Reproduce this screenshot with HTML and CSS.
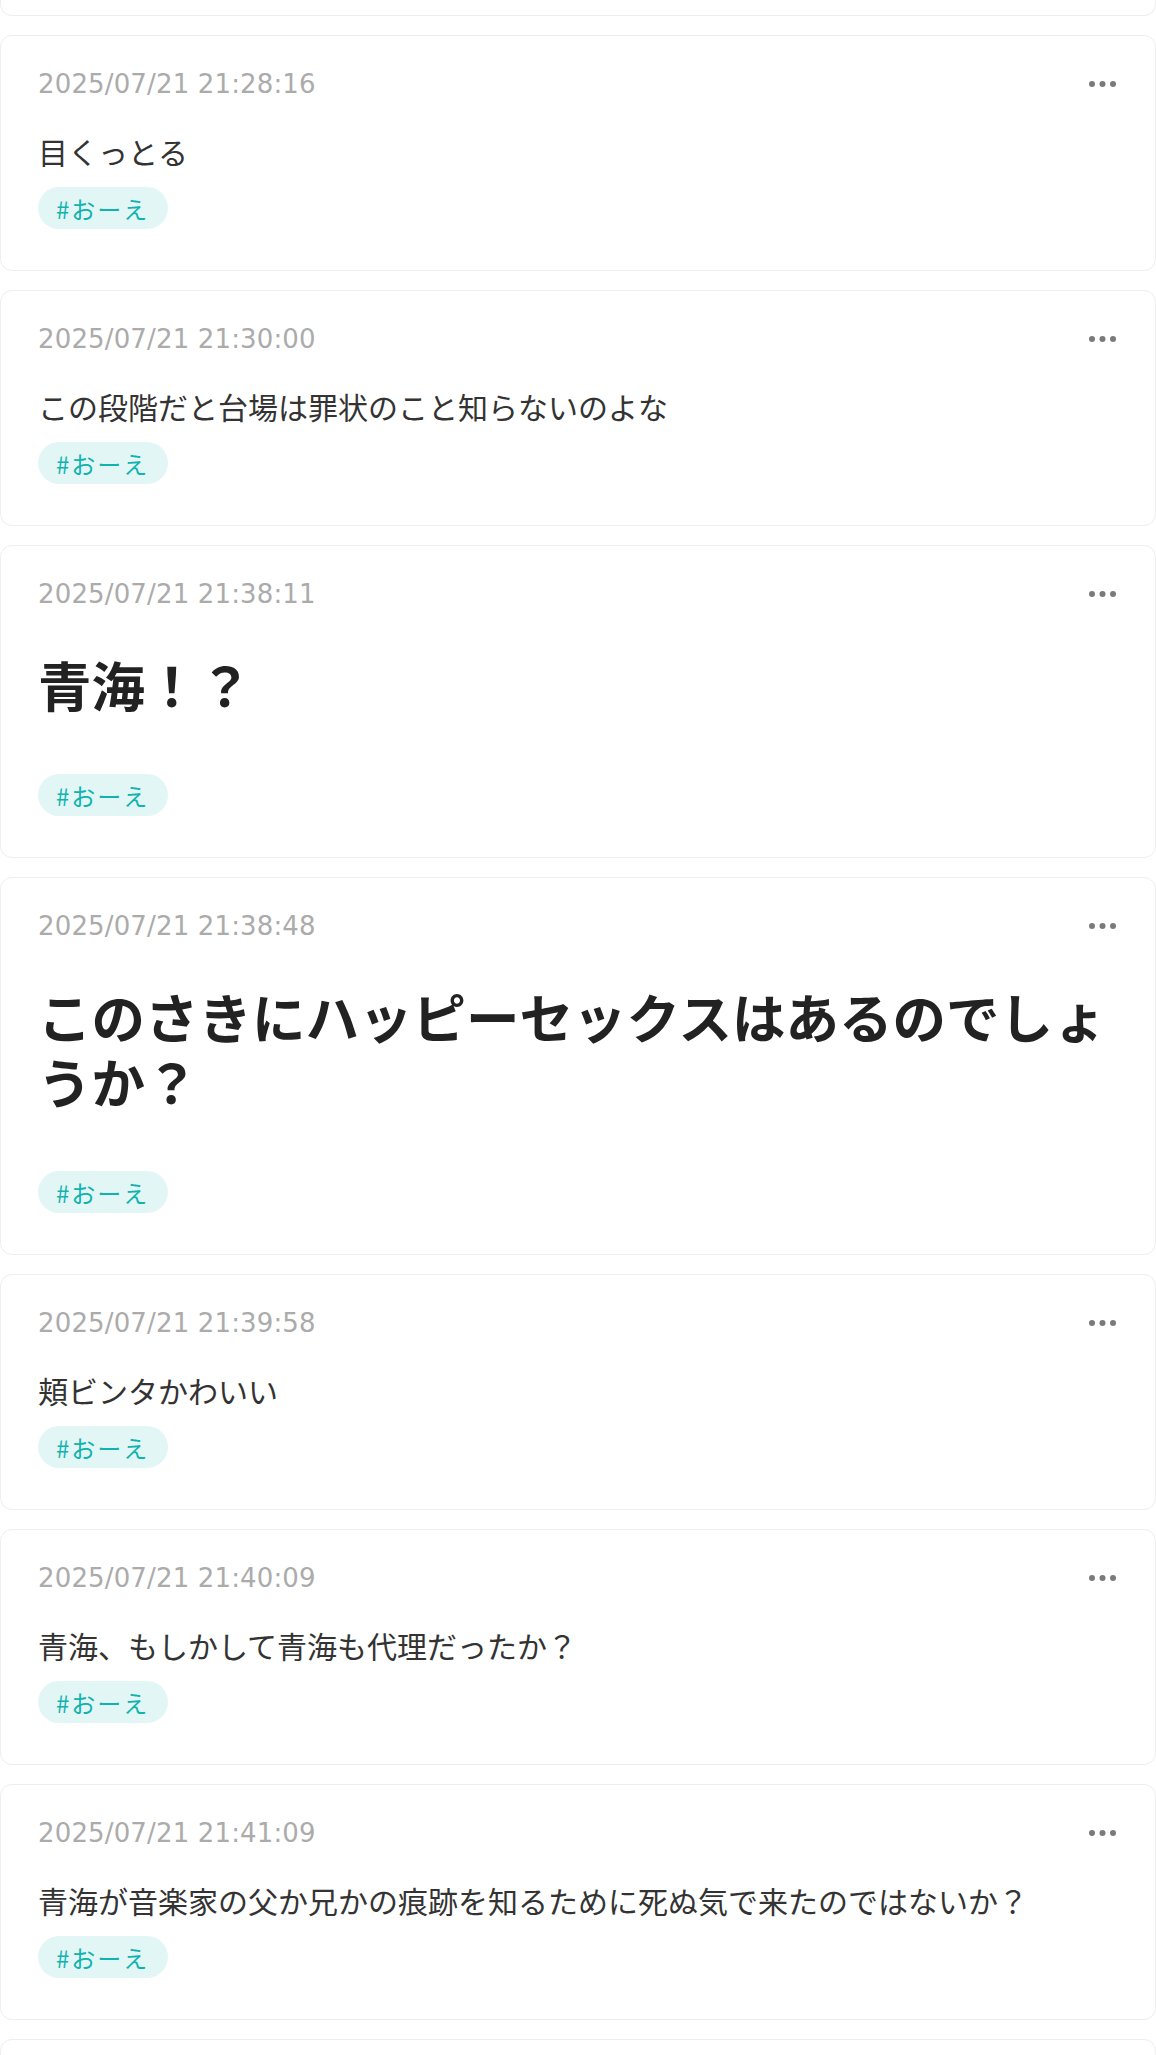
FILE: index.html
```html
<!DOCTYPE html>
<html lang="ja">
<head>
<meta charset="utf-8">
<title>memo</title>
<link rel="stylesheet" href="styles.css">
</head>
<body>
<main class="list">
  <article class="card card-partial"></article>

  <article class="card">
    <header class="card-head">
      <time class="stamp">2025/07/21 21:28:16</time>
      <span class="more"><svg width="27" height="6" viewBox="0 0 27 6"><circle cx="3" cy="3" r="3"/><circle cx="13.5" cy="3" r="3"/><circle cx="24" cy="3" r="3"/></svg></span>
    </header>
    <p class="body">目くっとる</p>
    <div class="tags"><span class="tag">#おーえ</span></div>
  </article>

  <article class="card">
    <header class="card-head">
      <time class="stamp">2025/07/21 21:30:00</time>
      <span class="more"><svg width="27" height="6" viewBox="0 0 27 6"><circle cx="3" cy="3" r="3"/><circle cx="13.5" cy="3" r="3"/><circle cx="24" cy="3" r="3"/></svg></span>
    </header>
    <p class="body">この段階だと台場は罪状のこと知らないのよな</p>
    <div class="tags"><span class="tag">#おーえ</span></div>
  </article>

  <article class="card">
    <header class="card-head">
      <time class="stamp">2025/07/21 21:38:11</time>
      <span class="more"><svg width="27" height="6" viewBox="0 0 27 6"><circle cx="3" cy="3" r="3"/><circle cx="13.5" cy="3" r="3"/><circle cx="24" cy="3" r="3"/></svg></span>
    </header>
    <h1 class="headline">青海！？</h1>
    <div class="tags"><span class="tag">#おーえ</span></div>
  </article>

  <article class="card">
    <header class="card-head">
      <time class="stamp">2025/07/21 21:38:48</time>
      <span class="more"><svg width="27" height="6" viewBox="0 0 27 6"><circle cx="3" cy="3" r="3"/><circle cx="13.5" cy="3" r="3"/><circle cx="24" cy="3" r="3"/></svg></span>
    </header>
    <h1 class="headline">このさきにハッピーセックスはあるのでしょうか？</h1>
    <div class="tags"><span class="tag">#おーえ</span></div>
  </article>

  <article class="card">
    <header class="card-head">
      <time class="stamp">2025/07/21 21:39:58</time>
      <span class="more"><svg width="27" height="6" viewBox="0 0 27 6"><circle cx="3" cy="3" r="3"/><circle cx="13.5" cy="3" r="3"/><circle cx="24" cy="3" r="3"/></svg></span>
    </header>
    <p class="body">頬ビンタかわいい</p>
    <div class="tags"><span class="tag">#おーえ</span></div>
  </article>

  <article class="card">
    <header class="card-head">
      <time class="stamp">2025/07/21 21:40:09</time>
      <span class="more"><svg width="27" height="6" viewBox="0 0 27 6"><circle cx="3" cy="3" r="3"/><circle cx="13.5" cy="3" r="3"/><circle cx="24" cy="3" r="3"/></svg></span>
    </header>
    <p class="body">青海、もしかして青海も代理だったか？</p>
    <div class="tags"><span class="tag">#おーえ</span></div>
  </article>

  <article class="card">
    <header class="card-head">
      <time class="stamp">2025/07/21 21:41:09</time>
      <span class="more"><svg width="27" height="6" viewBox="0 0 27 6"><circle cx="3" cy="3" r="3"/><circle cx="13.5" cy="3" r="3"/><circle cx="24" cy="3" r="3"/></svg></span>
    </header>
    <p class="body">青海が音楽家の父か兄かの痕跡を知るために死ぬ気で来たのではないか？</p>
    <div class="tags"><span class="tag">#おーえ</span></div>
  </article>

  <article class="card card-next"></article>
</main>
</body>
</html>
```

FILE: styles.css
```css
html, body {
  margin: 0;
  padding: 0;
  background: #ffffff;
  overflow: hidden;
}

body {
  font-family: "DejaVu Sans", "Noto Sans CJK JP", sans-serif;
  color: #333333;
}

.list {
  display: flex;
  flex-direction: column;
  gap: 19px;
}

.card {
  background: #ffffff;
  border: 1px solid #eeeeee;
  border-radius: 12px;
  padding: 28px 37px 41px;
}

.card-partial {
  height: 15px;
  padding: 0;
  border-top: none;
  border-radius: 0 0 12px 12px;
}

.card-next {
  height: 60px;
  padding: 0;
}

.card-head {
  display: flex;
  align-items: center;
  justify-content: space-between;
  height: 40px;
}

.stamp {
  font-size: 26px;
  line-height: 40px;
  letter-spacing: 0.15px;
  color: #ababab;
}

.more {
  display: flex;
  margin-right: 2px;
}

.more svg {
  fill: #7a7a7a;
}

.body {
  margin: 25px 0 0;
  font-family: "Noto Sans CJK JP", sans-serif;
  font-size: 30px;
  line-height: 45px;
  color: #333333;
}

.headline {
  margin: 37px 0 58px;
  font-family: "Noto Sans CJK JP", sans-serif;
  font-size: 53.5px;
  line-height: 65px;
  font-weight: 700;
  color: #222222;
}

.body + .tags {
  margin-top: 13px;
}

.tags {
  display: flex;
}

.tag {
  display: inline-flex;
  align-items: center;
  height: 42px;
  padding: 0 19px 0 18px;
  border-radius: 21px;
  background: #e3f6f6;
  color: #12b3ae;
  font-family: "Noto Sans CJK JP", sans-serif;
  font-size: 24px;
  letter-spacing: 2px;
}
```
